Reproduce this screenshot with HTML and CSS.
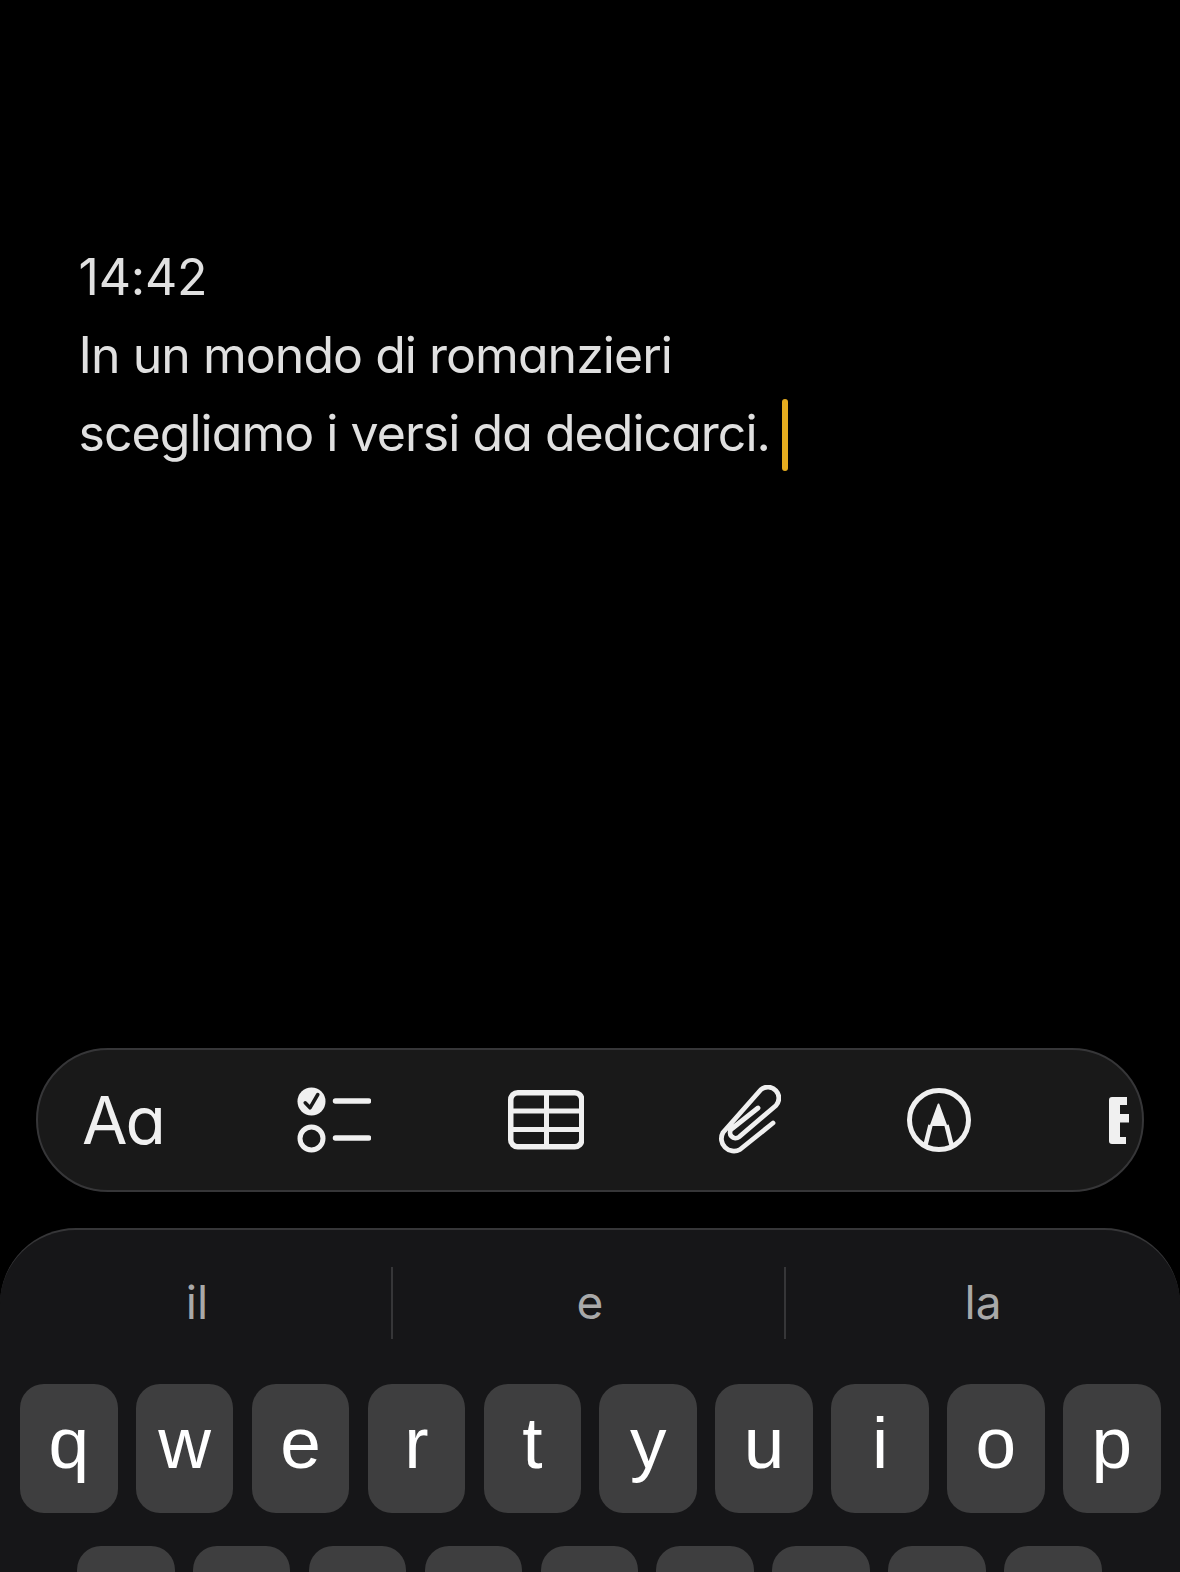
FILE: index.html
```html
<!DOCTYPE html>
<html lang="it">
<head>
<meta charset="utf-8">
<title>Nota</title>
<link rel="stylesheet" href="styles.css">
</head>
<body>
<main class="note">
  <p class="line line-time">14:42</p>
  <p class="line">In un mondo di romanzieri</p>
  <p class="line">scegliamo i versi da dedicarci.<span class="caret"></span></p>
</main>
<nav class="toolbar">
  <div class="tools">
    <span class="aa">Aa</span>
    <svg class="ic-check" width="74" height="66" viewBox="0 0 74 66"><circle cx="14.500" cy="14.500" r="14" fill="#f0f0f0"/><path d="M8.200 15.800l4.800 5 7.800-13.300" fill="none" stroke="#1a1a1a" stroke-width="3.500" stroke-linecap="round" stroke-linejoin="round"/><circle cx="14.500" cy="51.500" r="11.500" fill="none" stroke="#f0f0f0" stroke-width="5"/><path d="M38.500 14h33M38.500 51h33" stroke="#f0f0f0" stroke-width="5.500" stroke-linecap="round"/></svg>
    <svg class="ic-table" width="76" height="60" viewBox="0 0 76 60"><rect x="2.750" y="2.750" width="71" height="54" rx="7" fill="none" stroke="#f0f0f0" stroke-width="5.500"/><path d="M2 21h72M2 39.500h72M38.500 2v56" stroke="#f0f0f0" stroke-width="5"/></svg>
    <svg class="ic-clip" width="62" height="70" viewBox="14 10 62 70"><path d="M68 48L35 74.500A12.500 12.500 0 0 1 18 57.500L56 14.500A11 11 0 0 1 71 30.500L34 62A5.500 5.500 0 0 1 26.500 54L53 33" fill="none" stroke="#f0f0f0" stroke-width="4.800" stroke-linecap="round" stroke-linejoin="round"/></svg>
    <svg class="ic-mark" width="66" height="66" viewBox="0 0 66 66"><circle cx="33" cy="33" r="29.500" fill="none" stroke="#f0f0f0" stroke-width="5"/><path d="M32.500 17.500l7.500 20.500H25z" fill="#f0f0f0" stroke="#f0f0f0" stroke-width="2" stroke-linejoin="round"/><path d="M24.500 38l-5 20M40.500 38l5 20" stroke="#f0f0f0" stroke-width="4.500" fill="none"/></svg>
    <svg class="ic-e" width="40" height="47" viewBox="0 0 40 47"><path d="M3 0H18V8H11V17H40V25.500H11V40H17V47H3Q0 47 0 44V3Q0 0 3 0Z" fill="#f0f0f0"/></svg>
  </div>
</nav>
<section class="keyboard">
  <div class="suggestions">
    <span class="sug">il</span>
    <span class="sug sug-mid">e</span>
    <span class="sug">la</span>
  </div>
  <div class="row">
    <span class="key">q</span><span class="key">w</span><span class="key">e</span><span class="key">r</span><span class="key">t</span><span class="key">y</span><span class="key">u</span><span class="key">i</span><span class="key">o</span><span class="key">p</span>
  </div>
  <div class="row row-2">
    <span class="key"></span><span class="key"></span><span class="key"></span><span class="key"></span><span class="key"></span><span class="key"></span><span class="key"></span><span class="key"></span><span class="key"></span>
  </div>
</section>
</body>
</html>
```
FILE: styles.css
```css
* { box-sizing: border-box; }
html, body { margin: 0; height: 1572px; overflow: hidden; background: #000; }
body { font-family: Inter, "Liberation Sans", sans-serif; }

.note { height: 1048px; padding: 238px 0 0 78.5px; }
.line {
  margin: 0;
  height: 78px;
  line-height: 78px;
  font-size: 50px;
  font-weight: 400;
  letter-spacing: -0.96px;
  color: #e0e0e0;
  font-feature-settings: "cv11";
  white-space: nowrap;
}
.line-time { letter-spacing: -0.2px; }
.caret {
  display: inline-block;
  width: 6px;
  height: 72px;
  margin-left: 12px;
  vertical-align: -20px;
  border-radius: 3px;
  background: #e5ac1f;
}

.toolbar {
  height: 144px;
  width: 1108px;
  margin-left: 36px;
  padding: 0 13px 0 45px;
  border: 2px solid #363638;
  border-radius: 72px;
  background: #191919;
  display: flex;
  align-items: center;
}
.tools {
  flex: 1;
  min-width: 0;
  height: 100%;
  display: flex;
  align-items: center;
  gap: 135px;
  overflow: hidden;
}
.tools svg { flex: none; }
.aa {
  flex: none;
  width: 80px;
  margin-left: -1px;
  font-size: 66px;
  line-height: 1;
  color: #f0f0f0;
  font-weight: 400;
  font-feature-settings: "cv11";
  letter-spacing: -2px;
}
.ic-table { margin-left: 2px; }
.ic-mark { margin-left: -10px; }
.ic-e { margin-left: 2px; }

.keyboard {
  height: 344px;
  margin-top: 36px;
  padding-right: 3px;
  border-top: 2px solid #363638;
  border-radius: 76px 76px 0 0;
  background: #161618;
  overflow: hidden;
}
.suggestions {
  height: 154px;
  padding-top: 37px;
  display: flex;
  align-items: flex-start;
}
.sug {
  flex: 1;
  height: 72px;
  padding-left: 3px;
  line-height: 70px;
  text-align: center;
  font-family: Inter, sans-serif;
  font-size: 46px;
  color: #a9a9a9;
}
.sug-mid {
  flex: none;
  width: 395px;
  border-left: 2px solid #363638;
  border-right: 2px solid #363638;
}
.row {
  display: flex;
  gap: 18.3px;
  padding-left: 20px;
  margin-bottom: 33px;
}
.row-2 { padding-left: 77px; }
.key {
  flex: none;
  width: 97.6px;
  height: 129px;
  border-radius: 24px;
  background: #3e3e3f;
  color: #fff;
  font-family: "Liberation Sans", sans-serif;
  font-size: 73px;
  line-height: 118px;
  text-align: center;
}
```
